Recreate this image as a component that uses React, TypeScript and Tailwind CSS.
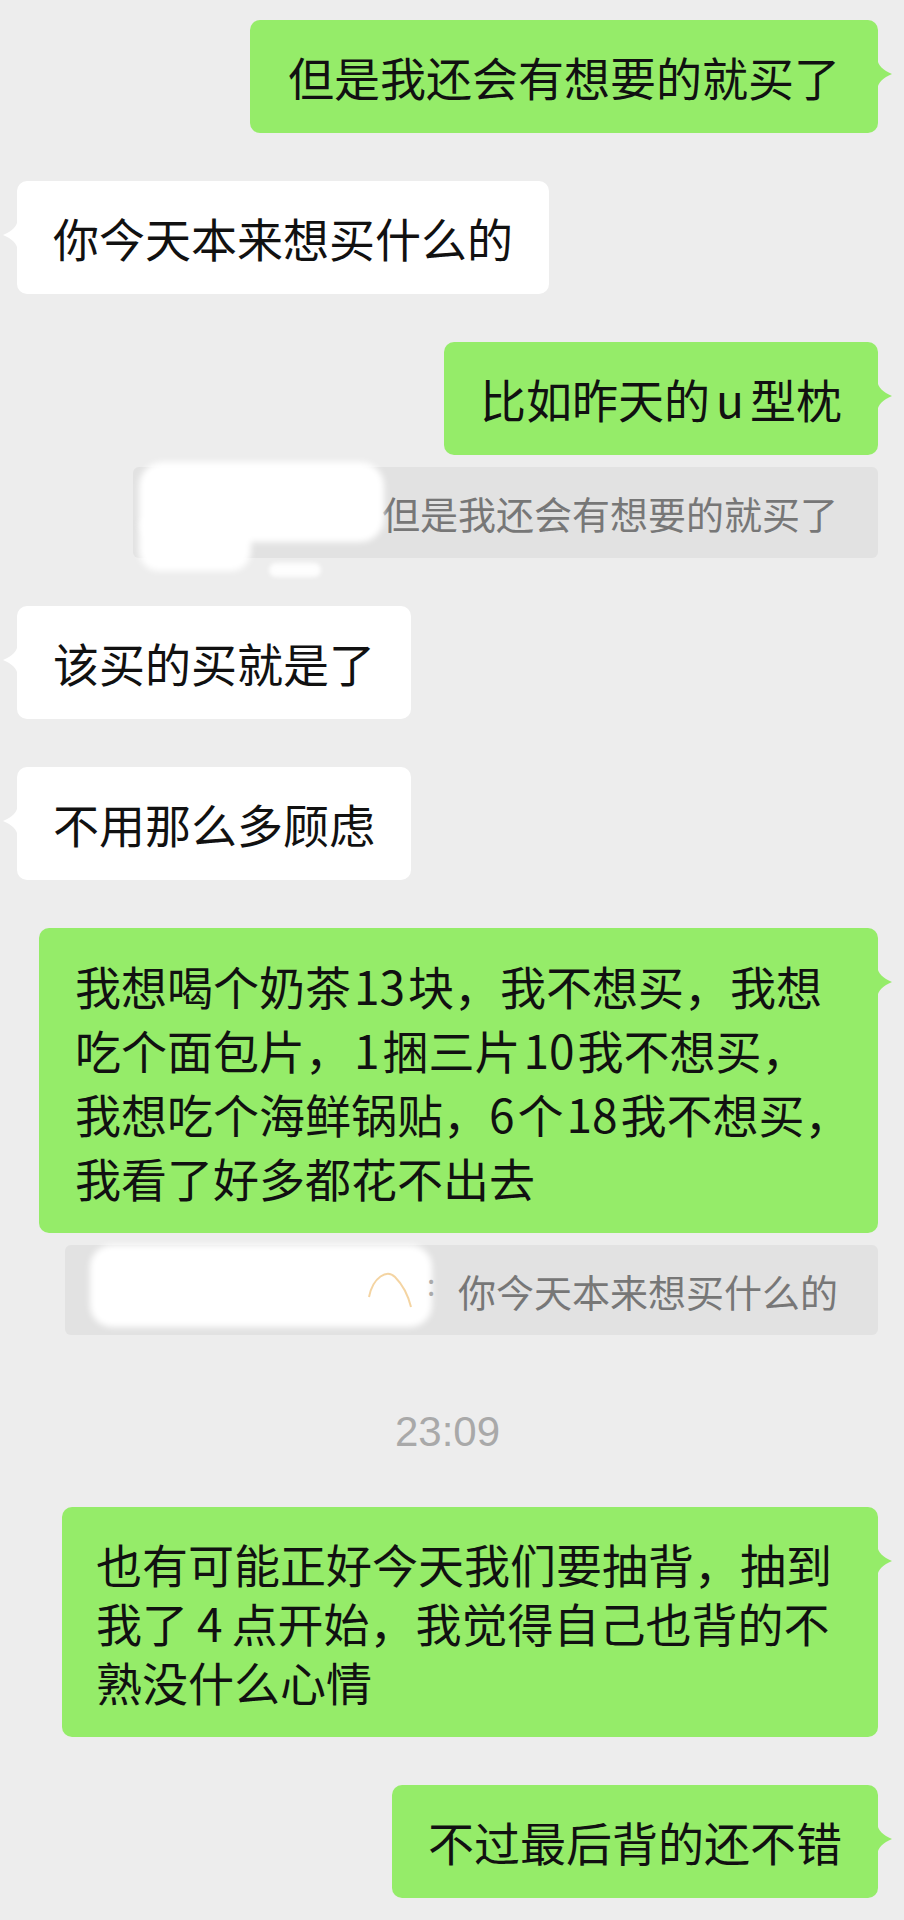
import type { ReactNode } from 'react'

function Tail({ side, color }: { side: 'left' | 'right'; color: string }) {
  if (side === 'right') {
    return (
      <svg className="absolute left-full -ml-px top-[38px]" width="15" height="32" viewBox="0 0 15 32">
        <path d="M0 0 C1 8 6 12 15 16 C6 20 1 24 0 32 Z" fill={color} />
      </svg>
    )
  }
  return (
    <svg className="absolute right-full -mr-px top-[38px]" width="15" height="32" viewBox="0 0 15 32">
      <path d="M15 0 C14 8 9 12 0 16 C9 20 14 24 15 32 Z" fill={color} />
    </svg>
  )
}

function Bubble({
  side,
  children,
  className = '',
}: {
  side: 'left' | 'right'
  children: ReactNode
  className?: string
}) {
  const mine = side === 'right'
  return (
    <div
      className={
        'relative rounded-[10px] text-[46px] text-[#111] whitespace-nowrap ' +
        (mine ? 'self-end bg-[#95ec69] ' : 'self-start bg-white ') +
        className
      }
    >
      <Tail side={side} color={mine ? '#95ec69' : '#ffffff'} />
      {children}
    </div>
  )
}

// latin runs get a little air around them, like the phone does
function L({ children }: { children: ReactNode }) {
  return <span className="px-[3px]">{children}</span>
}

function Single({ side, text, className = '' }: { side: 'left' | 'right'; text: ReactNode; className?: string }) {
  return (
    <Bubble side={side} className={'px-[36px] py-[24px] leading-[65px] ' + className}>
      {text}
    </Bubble>
  )
}

export default function App() {
  return (
    <div className="min-h-screen bg-[#ededed] flex flex-col pl-[17px] pr-[26px] pt-[20px] font-['Noto_Sans_CJK_SC','Noto_Sans',sans-serif]">
      <Single side="right" text="但是我还会有想要的就买了" className="px-[38px]" />

      <Single side="left" text="你今天本来想买什么的" className="mt-[48px]" />

      <Single
        side="right"
        className="mt-[48px]"
        text={
          <>
            比如昨天的<span className="px-[6px]">u</span>型枕
          </>
        }
      />

      {/* quoted reply, name smudged out */}
      <div className="self-end mt-[12px] h-[91px] rounded-[6px] bg-[#e2e2e2] flex items-center pr-[40px] relative text-[38px] text-[#777]">
        <div className="w-[249px] h-full relative">
          <span className="absolute left-[22px] top-[26px] text-[30px] text-[#d6d6d6]">Oi°</span>
          <div className="absolute left-[6px] -top-[5px] w-[245px] h-[80px] rounded-[24px] bg-white blur-[3px]" />
          <div className="absolute left-[6px] top-[44px] w-[112px] h-[60px] rounded-[20px] bg-white blur-[3px]" />
          <div className="absolute left-[136px] top-[96px] w-[52px] h-[14px] rounded-full bg-white/90 blur-[2px]" />
        </div>
        <span>但是我还会有想要的就买了</span>
      </div>

      <Single side="left" text="该买的买就是了" className="mt-[48px]" />

      <Single side="left" text="不用那么多顾虑" className="mt-[48px]" />

      <Bubble side="right" className="mt-[48px] w-[839px] pl-[36px] pt-[25px] pb-[24px] leading-[64px]">
        <div>
          我想喝个奶茶<L>13</L>块，我不想买，我想
        </div>
        <div>
          吃个面包片，<L>1</L>捆三片<L>10</L>我不想买，
        </div>
        <div>
          我想吃个海鲜锅贴，<span className="pr-[3px]">6</span>个<L>18</L>我不想买，
        </div>
        <div>我看了好多都花不出去</div>
      </Bubble>

      <div className="self-end mt-[12px] h-[90px] rounded-[6px] bg-[#e2e2e2] flex items-center pr-[40px] text-[38px] text-[#777]">
        <div className="w-[393px] h-full relative">
          <div className="absolute left-[25px] top-0 w-[342px] h-[82px] rounded-[22px] bg-white blur-[3px]" />
          <svg className="absolute left-[300px] top-[22px]" width="50" height="46" viewBox="0 0 50 46">
            <path d="M4 30 C8 10 22 2 30 10 C36 16 42 24 46 40" fill="none" stroke="#f0c27a" strokeWidth="2" opacity="0.7" />
          </svg>
          <span className="absolute left-[362px] top-[16px] text-[30px] text-[#aaa]">:</span>
        </div>
        <span>你今天本来想买什么的</span>
      </div>

      <div className="mt-[77px] text-center leading-[40px] text-[42px] text-[#a9a9a9] font-['Liberation_Sans',sans-serif]">
        23:09
      </div>

      <Bubble side="right" className="mt-[55px] w-[816px] pl-[34px] pt-[27px] pb-[26px] leading-[59px]">
        <div>也有可能正好今天我们要抽背，抽到</div>
        <div>
          我了<span className="px-[9px]">4</span>点开始，我觉得自己也背的不
        </div>
        <div>熟没什么心情</div>
      </Bubble>

      <Single side="right" text="不过最后背的还不错" className="mt-[48px]" />
    </div>
  )
}
